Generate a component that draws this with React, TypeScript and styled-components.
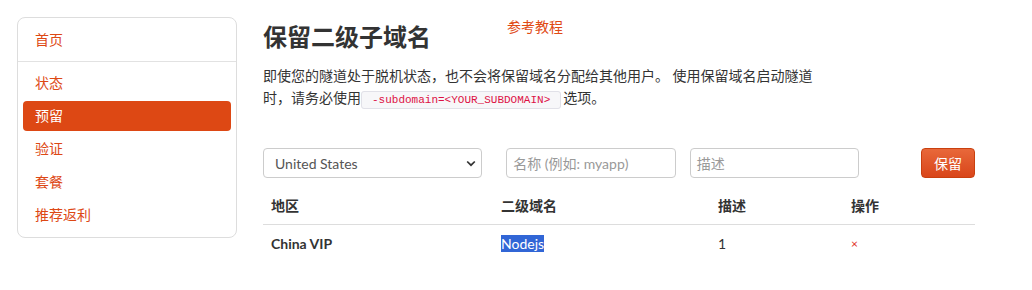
import React from 'react'
import styled, { createGlobalStyle } from 'styled-components'

const GlobalStyle = createGlobalStyle`
  html, body {
    margin: 0;
    background: #fff;
  }
  body {
    font-family: Lato, 'Noto Sans CJK SC', sans-serif;
    font-size: 14px;
    color: #333;
  }
`

const orange = '#dd4814'

const Page = styled.div`
  display: flex;
  align-items: flex-start;
  gap: 26px;
  padding: 17px;
  box-sizing: border-box;
  width: 992px;
`

const Sidebar = styled.nav`
  width: 220px;
  flex: none;
  box-sizing: border-box;
  border: 1px solid #ddd;
  border-radius: 8px;
  padding: 7px 0;
`

const NavGroup = styled.div`
  display: flex;
  flex-direction: column;
  gap: 3px;
  padding: 0 5px;
`

const Divider = styled.div`
  height: 1px;
  background: #e2e2e2;
  margin: 6px 0;
`

const NavItem = styled.a<{ $active?: boolean }>`
  display: block;
  height: 30px;
  line-height: 30px;
  padding: 0 12px;
  border-radius: 4px;
  color: ${(p) => (p.$active ? '#fff' : orange)};
  background: ${(p) => (p.$active ? orange : 'transparent')};
  text-decoration: none;
`

const Main = styled.main`
  width: 712px;
  flex: none;
`

const TitleRow = styled.div`
  display: flex;
  align-items: flex-start;
`

const Title = styled.h2`
  margin: 3px 0 0;
  font-size: 24px;
  line-height: 34px;
  font-weight: bold;
  color: #333;
  width: 244px;
`

const Guide = styled.a`
  line-height: 20px;
  color: #e04a14;
  text-decoration: none;
`

const Intro = styled.p`
  margin: 11px 0 0;
  max-width: 556px;
  line-height: 22px;
  color: #333;
`

const Code = styled.code`
  font-family: 'Liberation Mono', 'DejaVu Sans Mono', monospace;
  font-size: 11px;
  line-height: 14px;
  color: #dd1144;
  background: #f7f7f9;
  border: 1px solid #e1e1e8;
  border-radius: 3px;
  padding: 2px 10px;
  margin-right: 2px;
`

const FormRow = styled.form`
  display: flex;
  align-items: center;
  margin-top: 39px;
`

const SelectBox = styled.div`
  width: 220px;
  height: 30px;
  box-sizing: border-box;
  border: 1px solid #ccc;
  border-radius: 4px;
  display: flex;
  align-items: center;
  justify-content: space-between;
  padding: 0 5px 0 11px;
  color: #555;
  margin-right: 24px;
`

const Field = styled.div<{ $gap?: number }>`
  width: 170px;
  height: 30px;
  box-sizing: border-box;
  border: 1px solid #ccc;
  border-radius: 4px;
  display: flex;
  align-items: center;
  padding: 0 6px;
  color: #999;
  margin-right: ${(p) => p.$gap ?? 0}px;
`

const ReserveButton = styled.button`
  width: 54px;
  height: 30px;
  border: 1px solid #c9400f;
  border-radius: 4px;
  background: linear-gradient(#e8683a, #d9461a);
  color: #fff;
  font-family: inherit;
  font-size: 14px;
  padding: 0;
`

const Table = styled.table`
  width: 712px;
  margin-top: 10px;
  border-collapse: collapse;
  table-layout: fixed;
`

const Col = styled.col<{ $w: number }>`
  width: ${(p) => p.$w}px;
`

const Th = styled.th`
  text-align: left;
  font-weight: bold;
  line-height: 20px;
  padding: 8px;
  border-bottom: 1px solid #ddd;
  color: #333;
`

const Td = styled.td<{ $bold?: boolean }>`
  line-height: 20px;
  padding: 8px;
  font-weight: ${(p) => (p.$bold ? 'bold' : 'normal')};
  color: #333;
`

const Selected = styled.span`
  background: #3166d6;
  color: #fff;
`

const Remove = styled.a`
  color: #e0301e;
  font-size: 12px;
  text-decoration: none;
`

const Chevron = () => (
  <svg width="10" height="7" viewBox="0 0 10 7">
    <path d="M1.2 1.5 L5 5.2 L8.8 1.5" fill="none" stroke="#333" strokeWidth="1.7" />
  </svg>
)

export default function App() {
  return (
    <>
      <GlobalStyle />
      <Page>
        <Sidebar>
          <NavGroup>
            <NavItem>首页</NavItem>
          </NavGroup>
          <Divider />
          <NavGroup>
            <NavItem>状态</NavItem>
            <NavItem $active>预留</NavItem>
            <NavItem>验证</NavItem>
            <NavItem>套餐</NavItem>
            <NavItem>推荐返利</NavItem>
          </NavGroup>
        </Sidebar>
        <Main>
          <TitleRow>
            <Title>保留二级子域名</Title>
            <Guide>参考教程</Guide>
          </TitleRow>
          <Intro>
            即使您的隧道处于脱机状态，也不会将保留域名分配给其他用户。 使用保留域名启动隧道时，请务必使用
            <Code>-subdomain=&lt;YOUR_SUBDOMAIN&gt;</Code>选项。
          </Intro>
          <FormRow>
            <SelectBox>
              United States
              <Chevron />
            </SelectBox>
            <Field $gap={14}>名称 (例如: myapp)</Field>
            <Field $gap={62}>描述</Field>
            <ReserveButton type="button">保留</ReserveButton>
          </FormRow>
          <Table>
            <colgroup>
              <Col $w={230} />
              <Col $w={217} />
              <Col $w={133} />
              <Col $w={132} />
            </colgroup>
            <thead>
              <tr>
                <Th>地区</Th>
                <Th>二级域名</Th>
                <Th>描述</Th>
                <Th>操作</Th>
              </tr>
            </thead>
            <tbody>
              <tr>
                <Td $bold>China VIP</Td>
                <Td>
                  <Selected>Nodejs</Selected>
                </Td>
                <Td>1</Td>
                <Td>
                  <Remove>×</Remove>
                </Td>
              </tr>
            </tbody>
          </Table>
        </Main>
      </Page>
    </>
  )
}
